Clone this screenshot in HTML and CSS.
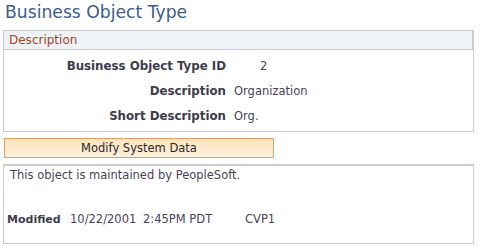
FILE: index.html
```html
<!DOCTYPE html>
<html>
  <head>
    <meta charset="UTF-8" />
    <title>Business Object Type</title>
    <link rel="stylesheet" href="styles.css">
  </head>
  <body>
    <h1 class="page-title">Business Object Type</h1>
    <div class="group">
      <div class="group-head">Description</div>
      <div class="group-body">
        <div class="field-row">
          <span class="field-label">Business Object Type ID</span>
          <span class="field-value field-num">2</span>
        </div>
        <div class="field-row">
          <span class="field-label">Description</span>
          <span class="field-value">Organization</span>
        </div>
        <div class="field-row">
          <span class="field-label">Short Description</span>
          <span class="field-value">Org.</span>
        </div>
      </div>
    </div>
    <button class="btn" type="button">Modify System Data</button>
    <div class="note-box">
      <p class="note">This object is maintained by PeopleSoft.</p>
      <div class="modified">
        <span class="modified-label">Modified</span>
        <span class="modified-date">10/22/2001</span>
        <span class="modified-time">2:45PM PDT</span>
        <span class="modified-user">CVP1</span>
      </div>
    </div>
  </body>
</html>
```

FILE: styles.css
```css
body {
  font-family: "DejaVu Sans", Verdana, sans-serif;
  font-size: 11.5px;
  color: #3c3c4a;
  margin: 0;
  background: #ffffff;
}

.page-title {
  font-size: 17.2px;
  font-weight: normal;
  color: #3d5b8c;
  margin: 0;
  padding: 1px 0 0 5px;
  height: 27px;
  line-height: 22px;
}

.group {
  margin: 2px 9px 0 3px;
}

.group-head {
  height: 18px;
  line-height: 18px;
  background: #eff3f5;
  border: 1px solid #c7cbd2;
  border-right: 2px solid #c7cbd2;
  color: #a3412c;
  font-size: 12px;
  padding-left: 5px;
}

.group-body {
  border: 1px solid #c7cbd2;
  border-top: none;
  padding: 3px 0 3px 0;
}

.field-row {
  display: grid;
  grid-template-columns: 222px 1fr;
  column-gap: 8px;
  height: 25px;
  align-items: center;
}

.field-label {
  text-align: right;
  font-weight: bold;
  font-size: 11.8px;
  color: #3c3c4a;
}

.field-value {
  color: #4a3f5a;
}

.field-num {
  padding-left: 26px;
}

.btn {
  display: block;
  margin: 6px 0 0 4px;
  width: 270px;
  height: 20px;
  padding: 0;
  border: 1px solid #dea06a;
  background: linear-gradient(#fde4bd, #fdf0dc);
  font-family: "DejaVu Sans", Verdana, sans-serif;
  font-size: 11.5px;
  color: #2a2a2a;
}

.note-box {
  margin: 6px 9px 0 3px;
  height: 77px;
  border: 1px solid #c7cbd2;
  border-top: 2px solid #c7cbd2;
}

.note {
  margin: 0;
  padding: 2px 0 0 6px;
  color: #4a3f5a;
}

.modified {
  display: flex;
  align-items: baseline;
  padding: 30px 0 0 3px;
}

.modified-label {
  font-weight: bold;
  font-size: 11px;
  color: #3c3c4a;
  width: 63px;
}

.modified-date {
  width: 73px;
  color: #4a3f5a;
}

.modified-time {
  width: 102px;
  color: #4a3f5a;
}

.modified-user {
  color: #4a3f5a;
}
```
